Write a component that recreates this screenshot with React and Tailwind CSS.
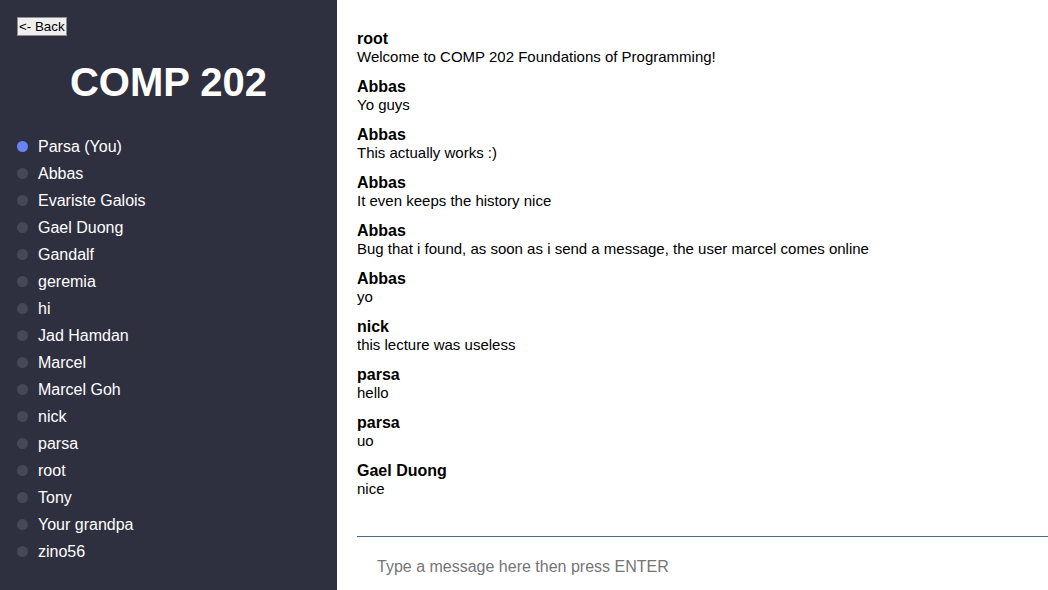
const users = [
  { name: 'Parsa (You)', online: true },
  { name: 'Abbas' },
  { name: 'Evariste Galois' },
  { name: 'Gael Duong' },
  { name: 'Gandalf' },
  { name: 'geremia' },
  { name: 'hi' },
  { name: 'Jad Hamdan' },
  { name: 'Marcel' },
  { name: 'Marcel Goh' },
  { name: 'nick' },
  { name: 'parsa' },
  { name: 'root' },
  { name: 'Tony' },
  { name: 'Your grandpa' },
  { name: 'zino56' },
];

const messages = [
  { from: 'root', text: 'Welcome to COMP 202 Foundations of Programming!' },
  { from: 'Abbas', text: 'Yo guys' },
  { from: 'Abbas', text: 'This actually works :)' },
  { from: 'Abbas', text: 'It even keeps the history nice' },
  {
    from: 'Abbas',
    text: 'Bug that i found, as soon as i send a message, the user marcel comes online',
  },
  { from: 'Abbas', text: 'yo' },
  { from: 'nick', text: 'this lecture was useless' },
  { from: 'parsa', text: 'hello' },
  { from: 'parsa', text: 'uo' },
  { from: 'Gael Duong', text: 'nice' },
];

function Sidebar() {
  return (
    <aside className="flex w-[337px] shrink-0 flex-col bg-[#2f303f] pt-[17px] text-white">
      <div className="flex pl-[17px]">
        <button className="block h-[19px] border border-[#8f8f8f] bg-[#efefef] px-[1px] text-[13.33px] leading-[15px] text-black">
          &lt;- Back
        </button>
      </div>
      <h1 className="mt-[23px] text-center text-[40px] font-bold leading-[46px]">COMP 202</h1>
      <ul className="mt-[28px] pl-[17px]">
        {users.map((u) => (
          <li key={u.name} className="flex h-[27px] items-center gap-[10px] text-[16px]">
            <span
              className={
                u.online
                  ? 'h-[11px] w-[11px] shrink-0 rounded-full bg-[#6685fb]'
                  : 'h-[11px] w-[11px] shrink-0 rounded-full bg-[#464859]'
              }
            />
            <span>{u.name}</span>
          </li>
        ))}
      </ul>
    </aside>
  );
}

function Chat() {
  return (
    <main className="flex min-w-0 flex-1 flex-col bg-white text-black">
      <div className="flex flex-1 flex-col gap-[12px] overflow-hidden pl-[20px] pt-[30px]">
        {messages.map((m, i) => (
          <div key={i} className="leading-[18px]">
            <div className="text-[16px] font-bold">{m.from}</div>
            <div className="text-[15px]">{m.text}</div>
          </div>
        ))}
      </div>
      <div className="ml-[20px] border-t border-[#4a6d8c]">
        <input
          autoFocus
          className="block h-[53px] w-full px-[20px] pt-[7px] text-[16px] outline-none placeholder:text-[#757575]"
          placeholder="Type a message here then press ENTER"
        />
      </div>
    </main>
  );
}

export default function App() {
  return (
    <div className="flex h-screen font-['Liberation_Sans',Arial,sans-serif]">
      <Sidebar />
      <Chat />
    </div>
  );
}
